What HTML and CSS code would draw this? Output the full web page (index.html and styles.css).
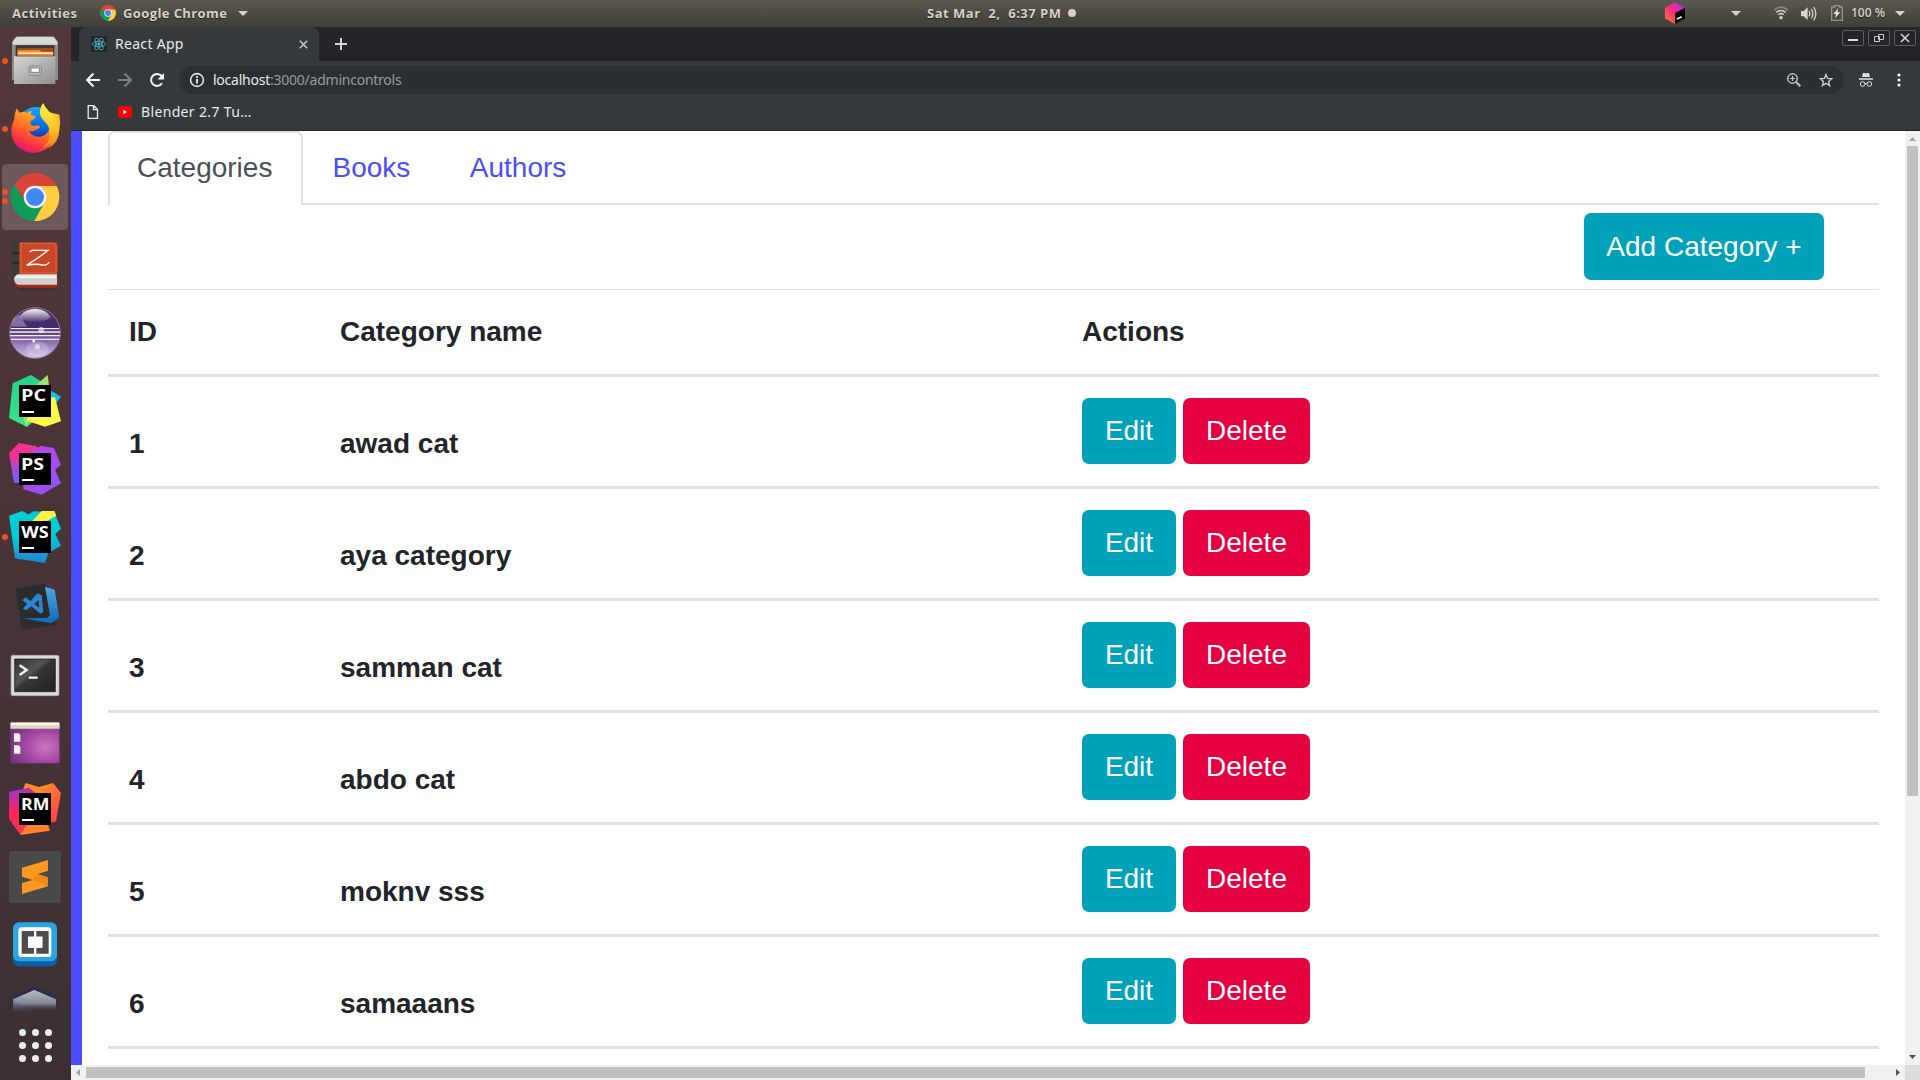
FILE: index.html
```html
<!DOCTYPE html>
<html lang="en">
<head>
<meta charset="utf-8">
<title>React App</title>
<link rel="stylesheet" href="styles.css">
</head>
<body>
<header class="topbar">
  <span class="tb activities">Activities</span>
  <svg class="tb-chrome" width="16" height="16" viewBox="32 68 146 146"><use href="#chrome"/></svg>
  <span class="tb appname">Google Chrome</span>
  <svg class="caret caret-app" width="10" height="5" viewBox="0 0 10 5"><path d="M0 0h10L5 5z"/></svg>
  <div class="clock"><span class="tb clock-text">Sat Mar&nbsp; 2,&nbsp; 6:37 PM</span><i class="clock-dot"></i></div>
  <div class="tray">
    <svg class="t-cube" width="20" height="22" viewBox="0 0 60 66">
      <defs><linearGradient id="tc" x1="0" y1="1" x2="1" y2="0"><stop offset="0" stop-color="#ff8a18"/><stop offset=".45" stop-color="#ff2d78"/><stop offset="1" stop-color="#9a2bff"/></linearGradient></defs>
      <path fill="url(#tc)" d="M30 0l30 17v33L30 66 0 49V17z"/><path d="M30 33l30-16v33L30 66z"/><path stroke="#fff" stroke-width="5" d="M36 51l14-7"/>
    </svg>
    <svg class="caret t-c1" width="10" height="5" viewBox="0 0 10 5"><path d="M0 0h10L5 5z"/></svg>
    <svg class="t-wifi" width="14" height="14" viewBox="0 0 42 42" fill="none" stroke="#d6d3cc" stroke-width="5"><path opacity=".45" d="M1 12Q21-5 41 12"/><path d="M7 19q14-11 28 0M13 26q8-6 16 0"/><circle cx="21" cy="35" r="5" fill="#d6d3cc" stroke="none"/></svg>
    <svg class="t-vol" width="16" height="15" viewBox="0 0 48 45" fill="none" stroke="#d6d3cc" stroke-width="4"><path fill="#d6d3cc" stroke="none" d="M0 15h8L20 4v38L8 31H0z"/><path d="M24 15q5 8 0 16M31 9q9 14 0 28M38 3q13 20 0 40"/></svg>
    <svg class="t-bat" width="12" height="16" viewBox="0 0 36 48"><path fill="none" stroke="#96938b" stroke-width="4" d="M2 6h8V2h16v4h8v40H2z"/><path fill="#e4e2dc" d="M22 10L7 27h8l-3 13 16-18h-9z"/></svg>
    <span class="tb pct">100 %</span>
    <svg class="caret t-c2" width="10" height="5" viewBox="0 0 10 5"><path d="M0 0h10L5 5z"/></svg>
  </div>
</header>
<div class="desktop">
  <nav class="dock">
    <div class="app dots-1"><svg viewBox="6 84 198 198">
      <defs><linearGradient id="fg" x1="0" y1="0" x2="1" y2="1"><stop offset="0" stop-color="#d6d6d6"/><stop offset="1" stop-color="#8f8f8f"/></linearGradient></defs>
      <path fill="#8d8d8d" d="M36 126l10-14q2-3 6-3h106q4 0 6 3l10 14v114H36z"/><path fill="#d9d9d9" d="M38 126l10-13q2-2 5-2h104q3 0 5 2l10 13v8H38z"/>
      <path fill="#333" d="M47 136h116v36H47z"/><path fill="#a24c16" d="M52 143h108v24H52z"/><path fill="#e58a36" d="M52 150h70v5h38v12H52z"/><path fill="#f9e0b0" d="M55 157h103v5H55z"/>
      <path fill="url(#fg)" d="M42 170h124v82H42z"/><path fill="#fff" opacity=".35" d="M42 168h124v4H42z"/><rect x="87" y="198" width="37" height="28" rx="4" fill="#bbb" stroke="#777" stroke-width="2"/><path fill="#fff" stroke="#555" stroke-width="2" d="M93 204h25v13H93z"/></svg></div>
    <div class="app dots-1"><svg viewBox="6 288 198 198">
      <defs><linearGradient id="ff1" x1=".7" y1="0" x2=".2" y2="1"><stop offset="0" stop-color="#ffd22e"/><stop offset=".45" stop-color="#ff7a20"/><stop offset=".75" stop-color="#ff3440"/><stop offset="1" stop-color="#d40c8c"/></linearGradient><linearGradient id="ff2" x1="0" y1="0" x2="0" y2="1"><stop offset="0" stop-color="#fff44f"/><stop offset=".6" stop-color="#ffc022"/><stop offset="1" stop-color="#ff7d22"/></linearGradient><linearGradient id="ff3" x1=".6" y1="0" x2=".5" y2="1"><stop offset="0" stop-color="#19a8ff"/><stop offset=".6" stop-color="#0560d8"/><stop offset="1" stop-color="#31107c"/></linearGradient></defs>
      <circle cx="108" cy="377" r="56" fill="url(#ff3)"/>
      <path fill="url(#ff1)" d="M50 325q4 8 10 13 14-6 20 1 5-6 16-7-4 8-3 13l14 4q-1 8-16 15l2 12q9 4 18 0 8 0 9 7-9 3-14 8-10 5-20 2 14 20 36 17 24-4 28-32 2-24-14-44l42 10q10 48-20 84-10 24-58 31-50-4-64-48-6-30 6-50 0-18 8-36z"/>
      <path fill="url(#ff2)" d="M130 309q6 16 24 31 20 18 24 48-1 40-32 56 7-8 8-16-12 14-28 15 26-18 22-48 0-16-12-28-20-18-16-36 2-14 10-22z"/></svg></div>
    <div class="app active dots-2"><svg viewBox="6 42 198 198"><g id="chrome">
      <path fill="#db4437" d="M43 105A72 72 0 0 1 170 108H105L74 150z"/><path fill="#0f9d58" d="M43 103A72 72 0 0 0 104 213L133 157 105 170 75 157z"/><path fill="#ffcd40" d="M170 108A72 72 0 0 1 103 213L134 157 132 118 105 108z"/>
      <circle cx="105" cy="141" r="34" fill="#f1f1f1"/><circle cx="105" cy="141" r="27" fill="#4285f4"/></g></svg></div>
    <div class="app"><svg viewBox="6 246 198 198">
      <path fill="#2a2a2a" opacity=".4" d="M48 412h118l8-6q-6 16-20 16H60z"/><path fill="#9e2c17" d="M44 380h129v28q0 5-8 5H56q-14-2-16-20z"/><path fill="#cfcfcf" d="M44 372h127v32H54q-12-6-12-18 0-8 2-14z"/><path fill="#f1f1f1" d="M50 376h118v9H46z"/>
      <path fill="#3d3935" d="M46 276h20v94q-20 2-24 14-2 12 8 26-12-4-14-22V286q0-8 10-10z"/><path fill="#c94726" d="M58 277h104q11 0 11 10v76q0 10-9 10H58z"/><path fill="none" stroke="#ef9b72" stroke-width="2" stroke-dasharray="5 4" d="M63 281h98q7 0 7 8v72q0 8-7 8H63z"/><path fill="none" stroke="#171513" stroke-width="3" d="M38 309h20M38 339h20"/>
      <path fill="none" stroke="#fff" stroke-width="4" d="M89 306q5-6 18-5h37q-22 18-64 45 30-6 48-1 14 2 20-9"/></svg></div>
    <div class="app"><svg viewBox="6 450 198 198">
      <defs><linearGradient id="ec" x1="0" y1="0" x2="0" y2="1"><stop offset="0" stop-color="#493567"/><stop offset=".4" stop-color="#45296d"/><stop offset=".62" stop-color="#8060aa"/><stop offset="1" stop-color="#d5c8ea"/></linearGradient><linearGradient id="ec2" x1="0" y1="0" x2="0" y2="1"><stop offset="0" stop-color="#fff" stop-opacity=".95"/><stop offset="1" stop-color="#fff" stop-opacity=".05"/></linearGradient></defs>
      <circle cx="105" cy="549" r="76" fill="url(#ec)" stroke="#8b7aa8" stroke-width="3"/><path fill="url(#ec2)" d="M58 500q14-23 47-24 33 1 47 24-12 16-47 16t-47-16z"/><path fill="#cbbde4" opacity=".45" d="M34 530q0-30 25-36 12 18 22 36z"/><path stroke="#f4f0fb" stroke-width="4" d="M33 536h144M30 546h150M30 557h150M33 568h144"/><g fill="#fff"><circle cx="124" cy="540" r="9" opacity=".6"/><circle cx="101" cy="573" r="4"/><ellipse cx="112" cy="597" rx="34" ry="22" opacity=".22"/><circle cx="112" cy="590" r="8" opacity=".5"/></g></svg></div>
    <div class="app"><svg viewBox="6 654 198 198">
      <defs><linearGradient id="pc" x1="0" y1="0" x2="0" y2="1"><stop offset="0" stop-color="#21d789"/><stop offset="1" stop-color="#3be28a"/></linearGradient></defs>
      <path fill="#07c3f2" d="M150 720l33 20-20 26h-30z"/><path fill="url(#pc)" d="M38 700l55-25 34 22 10 50-40 70-16 14-54-27z"/><path fill="#9be36b" d="M143 675l5 40-70 115-20-70 56-60z"/><path fill="#fcf84a" d="M152 742h13l18 72-48 16-55-18 10-30z"/>
      <path d="M57 705h96v96H57z"/><text class="jb" x="63" y="754" textLength="75" lengthAdjust="spacingAndGlyphs">PC</text><path fill="#fff" d="M66 783h36v6H66z"/></svg></div>
    <div class="app"><svg viewBox="6 18 198 198">
      <defs><linearGradient id="ps1" x1="0" y1="0" x2="0" y2="1"><stop offset="0" stop-color="#ff318c"/><stop offset=".35" stop-color="#f23199"/><stop offset=".8" stop-color="#7a5cff"/></linearGradient><linearGradient id="ps2" x1="0" y1="0" x2="1" y2="1"><stop offset="0" stop-color="#c740e0"/><stop offset="1" stop-color="#8a55fa"/></linearGradient></defs>
      <path fill="url(#ps1)" d="M27 70l30-31 52 10 20 20-60 90H42z"/><path fill="url(#ps2)" d="M89 65l34-17 39 6 21 50-18 15 18 41-58 34-55-16v-20z"/>
      <path d="M57 69h96v96H57z"/><text class="jb" x="63" y="119" textLength="69" lengthAdjust="spacingAndGlyphs">PS</text><path fill="#fff" d="M66 147h36v6H66z"/></svg></div>
    <div class="app dots-1"><svg viewBox="6 222 198 198">
      <defs><linearGradient id="ws1" x1="0" y1="0" x2="0" y2="1"><stop offset=".5" stop-color="#00cdd7"/><stop offset="1" stop-color="#2086d7"/></linearGradient></defs>
      <path fill="url(#ws1)" d="M27 257l40-14 22 12 60 100-14 44-90-14z"/><path fill="url(#ws1)" d="M75 260l25-16 63 2 20 50-17 16 17 35-68 40-30-22z"/><path fill="#fff045" d="M97 273l28-30h38l6 14-28 16z"/>
      <path d="M57 273h96v96H57z"/><text class="jb" x="64" y="323" textLength="82" lengthAdjust="spacingAndGlyphs">WS</text><path fill="#fff" d="M66 351h36v6H66z"/></svg></div>
    <div class="app"><svg viewBox="6 420 198 198">
      <defs><linearGradient id="vs" x1="0" y1="0" x2="0" y2="1"><stop offset="0" stop-color="#4fa6e4"/><stop offset="1" stop-color="#1268b8"/></linearGradient></defs>
      <path fill="#2b2b2b" stroke="#3a3636" stroke-width="2" d="M45 469l90-15 34 124-104 16z"/><path fill="url(#vs)" d="M135 464l29 9 14 84-25 17-86-15 73-1 10-8z"/><path fill="#2b86cf" fill-rule="evenodd" d="M112 484l13 6 5 50-9 5-27-22-15 12-10-5 12-15-14-10 9-9 16 11zM115 504l-12 12 15 11z"/></svg></div>
    <div class="app"><svg viewBox="6 630 198 198">
      <defs><linearGradient id="tm" x1="0" y1="0" x2="1" y2="1"><stop offset="0" stop-color="#333"/><stop offset=".4" stop-color="#555"/><stop offset=".5" stop-color="#333"/><stop offset="1" stop-color="#222"/></linearGradient></defs>
      <rect x="33" y="676" width="144" height="121" rx="5" fill="#d9d9d9" stroke="#aaa" stroke-width="2"/><path fill="url(#tm)" stroke="#111" stroke-width="2" d="M44 687h122v98H44z"/><path fill="none" stroke="#f2f2f2" stroke-width="7" d="M59 706l21 14-21 15M86 743h27"/></svg></div>
    <div class="app"><svg viewBox="6 -6 198 198">
      <defs><radialGradient id="sc" cx=".7" cy=".6" r=".7"><stop offset="0" stop-color="#cf79c0"/><stop offset=".5" stop-color="#a84aa6"/><stop offset="1" stop-color="#76377f"/></radialGradient></defs>
      <rect x="31" y="37" width="148" height="123" rx="5" fill="url(#sc)" stroke="#64306a" stroke-width="2"/><path fill="#dcd8c1" d="M31 41q0-4 4-4h141q3 0 3 4v15H31z"/><path fill="#f7f5e8" d="M33 39h144v6H33z"/><path fill="#f3eff3" d="M42 70h14l5 5v20H42zM42 106h14l5 5v20H42z"/></svg></div>
    <div class="app"><svg viewBox="6 198 198 198">
      <defs><linearGradient id="rm1" x1=".2" y1="0" x2=".4" y2="1"><stop offset="0" stop-color="#9039d0"/><stop offset=".5" stop-color="#ff2358"/><stop offset="1" stop-color="#ff3850"/></linearGradient><linearGradient id="rm2" x1="0" y1="0" x2="1" y2="1"><stop offset=".3" stop-color="#ff8b28"/><stop offset="1" stop-color="#ff305a"/></linearGradient></defs>
      <path fill="url(#rm2)" d="M77 219l40 12 42-12 24 30-15 86-30 5-68-105z"/><path fill="#ff812a" d="M61 375l20-50 60 10 9 27z"/><path fill="url(#rm1)" d="M27 245l60-12 50 40-60 77-16 24-34-48z"/>
      <path d="M57 249h96v96H57z"/><text class="jb" x="63" y="299" textLength="85" lengthAdjust="spacingAndGlyphs">RM</text><path fill="#fff" d="M66 327h36v6H66z"/></svg></div>
    <div class="app"><svg viewBox="6 402 198 198"><rect x="27" y="423" width="156" height="156" rx="7" fill="#494949"/><path fill="#ff9820" d="M144 450v32l-31 10 31 10v27l-78 23v-33l31-9-31-10v-27z"/><path fill="#d9770b" d="M97 510l16-18 31 10v26z" opacity=".45"/></svg></div>
    <div class="app"><svg viewBox="6 606 198 198"><rect x="39" y="644" width="132" height="125" rx="18" fill="#0a60a8"/><rect x="39" y="637" width="132" height="117" rx="18" fill="#28a5e2"/><rect x="55" y="652" width="99" height="89" rx="10" fill="#fff"/><path fill="#4d4d4d" d="M65 663h37v17H84v33h18v18H65zM109 663h37v68h-37v-18h18v-33h-18z"/><path fill="#fff" d="M84 680h43v33H84z"/></svg></div>
    <div class="app app-cut"><svg viewBox="6 810 198 198">
      <defs><linearGradient id="cb" x1="0" y1="0" x2="0" y2="1"><stop offset="0" stop-color="#b6c2c2"/><stop offset=".65" stop-color="#7f8493"/><stop offset="1" stop-color="#42353a" stop-opacity="0"/></linearGradient><linearGradient id="cb2" x1="0" y1="0" x2="0" y2="1"><stop offset=".4" stop-color="#292a54"/><stop offset="1" stop-color="#292a54" stop-opacity="0"/></linearGradient></defs>
      <path fill="url(#cb2)" opacity=".75" d="M30 862l65-29q8-4 16 0l65 29v38H30z"/><path fill="url(#cb)" d="M39 868l64-28 65 28v35H39z"/><path fill="#50578a" opacity=".3" d="M39 870l62 33H39z"/></svg></div>
    <div class="show-apps"><i></i><i></i><i></i><i></i><i></i><i></i><i></i><i></i><i></i></div>
  </nav>
  <main class="window">
    <div class="tabstrip">
      <div class="tab">
        <svg class="favicon" width="16" height="16" viewBox="0 0 48 48" fill="none" stroke="#4fb6d0" stroke-width="2.4"><rect width="48" height="48" rx="4" fill="#222428" stroke="none"/><ellipse cx="24" cy="24" rx="20" ry="8"/><ellipse cx="24" cy="24" rx="20" ry="8" transform="rotate(60 24 24)"/><ellipse cx="24" cy="24" rx="20" ry="8" transform="rotate(120 24 24)"/><circle cx="24" cy="24" r="3.5" fill="#61dafb"/></svg>
        <span class="ui tab-title">React App</span>
        <svg class="tab-close" width="9" height="9" viewBox="0 0 9 9" stroke="#c3c5c7" stroke-width="1.6"><path d="M.8.8l7.4 7.4M8.2.8L.8 8.2"/></svg>
      </div>
      <svg class="newtab" width="12" height="12" viewBox="0 0 12 12" stroke="#d0d2d4" stroke-width="2"><path d="M6 0v12M0 6h12"/></svg>
      <div class="winbtns">
        <span><svg width="20" height="14" viewBox="0 0 20 14"><path fill="#ddd" d="M5 8h10v2H5z"/></svg></span>
        <span><svg width="20" height="14" viewBox="0 0 20 14" fill="none" stroke="#ccc"><path d="M9.500 3.500h5v5h-5zM5.500 5.500h5v5h-5z"/></svg></span>
        <span><svg width="20" height="14" viewBox="0 0 20 14" stroke="#ddd" stroke-width="1.500"><path d="M6 3l8 8M14 3l-8 8"/></svg></span>
      </div>
    </div>
    <div class="toolbar">
      <svg class="nav-i" width="16" height="16" viewBox="0 0 16 16" fill="none" stroke="#f1f3f4" stroke-width="2"><path d="M15 8H2M8.500 1.500L2 8l6.500 6.500"/></svg>
      <svg class="nav-i" width="16" height="16" viewBox="0 0 16 16" fill="none" stroke="#7d8082" stroke-width="2"><path d="M1 8h13M7.500 1.500L14 8l-6.500 6.500"/></svg>
      <svg class="nav-i" width="16" height="16" viewBox="0 0 16 16" fill="none" stroke="#f1f3f4" stroke-width="2"><path d="M13 11.300A6 6 0 1 1 12.600 4"/><path fill="#f1f3f4" stroke="none" d="M15 1v6.500H8.500z"/></svg>
      <div class="omnibox">
        <svg width="16" height="16" viewBox="0 0 16 16" fill="none" stroke="#dfe1e3" stroke-width="1.600"><circle cx="8" cy="8" r="6.400"/><path stroke-width="2" d="M8 7v4.500M8 4v1.800"/></svg>
        <span class="ui url"><b>localhost</b>:3000/admincontrols</span>
        <svg class="zoom-i" width="14" height="14" viewBox="0 0 14 14" fill="none" stroke="#bfc3c6" stroke-width="1.500"><circle cx="5.500" cy="5.500" r="4.700"/><path stroke-width="2" d="M9 9l4.300 4.300"/><path stroke-width="1.200" d="M5.500 3v5M3 5.500h5"/></svg>
        <svg class="star-i" width="14" height="14" viewBox="0 0 14 14" fill="none" stroke="#c9ccce" stroke-width="1.400"><path d="M7 1.500l1.600 3.900 4.200.3-3.200 2.700 1 4.100L7 10.300l-3.600 2.200 1-4.100L1.200 5.700l4.200-.3z"/></svg>
      </div>
      <svg class="incog" width="14" height="14" viewBox="0 0 42 42"><path fill="#dfe1e3" d="M12 0h6l3 2 3-2h6l3 12H9zM0 16h42v4H0z"/><g fill="none" stroke="#dfe1e3" stroke-width="3"><circle cx="11" cy="33" r="7"/><circle cx="31" cy="33" r="7"/><path d="M18 32q3-2 6 0"/></g></svg>
      <svg class="kebab" width="4" height="14" viewBox="0 0 4 14" fill="#f1f3f4"><circle cx="2" cy="2" r="1.600"/><circle cx="2" cy="7" r="1.600"/><circle cx="2" cy="12" r="1.600"/></svg>
    </div>
    <div class="bookmarks">
      <svg width="12" height="14" viewBox="0 0 12 14" fill="none" stroke="#e8eaed" stroke-width="1.300"><path d="M1.200.7h5.600l3.700 3.800v8.800H1.200zM6.500.7v4h4"/></svg>
      <svg class="yt" width="14" height="12" viewBox="0 0 14 12"><rect width="14" height="12" rx="2.500" fill="#f00"/><path fill="#fff" d="M5.300 3.800v4.400L9 6z"/></svg>
      <span class="ui bm">Blender 2.7 Tu…</span>
    </div>
    <div class="viewport">
      <div class="page">
        <div class="nav-tabs"><a class="nav-link selected">Categories</a><a class="nav-link">Books</a><a class="nav-link">Authors</a></div>
        <div class="actions"><button class="btn info">Add Category +</button></div>
        <div class="table">
          <div class="row head"><span>ID</span><span>Category name</span><span>Actions</span></div>
          <div class="row"><span class="cell">1</span><span class="cell">awad cat</span><span class="btns"><button class="btn info">Edit</button><button class="btn danger">Delete</button></span></div>
          <div class="row"><span class="cell">2</span><span class="cell">aya category</span><span class="btns"><button class="btn info">Edit</button><button class="btn danger">Delete</button></span></div>
          <div class="row"><span class="cell">3</span><span class="cell">samman cat</span><span class="btns"><button class="btn info">Edit</button><button class="btn danger">Delete</button></span></div>
          <div class="row"><span class="cell">4</span><span class="cell">abdo cat</span><span class="btns"><button class="btn info">Edit</button><button class="btn danger">Delete</button></span></div>
          <div class="row"><span class="cell">5</span><span class="cell">moknv sss</span><span class="btns"><button class="btn info">Edit</button><button class="btn danger">Delete</button></span></div>
          <div class="row"><span class="cell">6</span><span class="cell">samaaans</span><span class="btns"><button class="btn info">Edit</button><button class="btn danger">Delete</button></span></div>
        </div>
      </div>
      <div class="vscroll"><svg width="15" height="15" viewBox="0 0 15 15" fill="#a3a3a3"><path d="M4 10h7L7.500 6z"/></svg><i></i><svg width="15" height="15" viewBox="0 0 15 15" fill="#505050"><path d="M4 5h7L7.500 9z"/></svg></div>
      <div class="hscroll"><svg width="15" height="15" viewBox="0 0 15 15" fill="#a3a3a3"><path d="M9 4v7L5 7.500z"/></svg><i></i><svg width="15" height="15" viewBox="0 0 15 15" fill="#505050"><path d="M6 4v7l4-3.500z"/></svg></div>
      <div class="corner"></div>
    </div>
  </main>
</div>
</body>
</html>
```
FILE: styles.css
```css
* { box-sizing: border-box; }
body { margin: 0; width: 1920px; height: 1080px; overflow: hidden; display: flex; flex-direction: column; font-family: "Liberation Sans", Arial, sans-serif; }
svg { display: block; flex: none; }
span { white-space: nowrap; }

.topbar { height: 27px; flex: none; display: flex; align-items: center; padding: 0 0 1px 12px; background: linear-gradient(#5a574e, #403e38); }
.tb { font: 700 13px/26px "Open Sans", "Noto Sans", sans-serif; color: #d6d2c9; text-shadow: 0 1px 1px #222; }
.activities { width: 88px; letter-spacing: .5px; }
.appname { width: 110px; margin-left: 7px; letter-spacing: .4px; }
.caret { fill: #d6d3cc; }
.caret-app { margin-left: 5px; }
.clock { margin-left: 679px; display: flex; align-items: center; width: 150px; }
.clock-text { width: 137px; letter-spacing: .5px; }
.clock-dot { width: 8px; height: 8px; border-radius: 50%; background: #d6d3cc; margin-left: 4px; }
.tray { margin-left: auto; display: flex; align-items: center; width: 255px; }
.t-c1 { margin-left: 46px; }
.t-wifi { margin-left: 33px; }
.t-vol { margin-left: 13px; }
.t-bat { margin-left: 14px; }
.pct { margin-left: 8px; width: 34px; font-size: 12px; font-weight: 600; }
.t-c2 { margin-left: 10px; }

.desktop { flex: 1; display: flex; min-height: 0; }
.dock { width: 71px; flex: none; padding: 1px 2px 0; display: flex; flex-direction: column; gap: 2px; background: linear-gradient(#52383b, #4b3438 40%, #3c3033); }
.app { width: 66px; height: 66px; flex: none; position: relative; border-radius: 4px; }
.app svg { width: 66px; height: 66px; }
.app.active { background: #6d585c; }
.app-cut { height: 32px; overflow: hidden; }
.dots-1::before, .dots-2::before, .dots-2::after { content: ""; position: absolute; left: 0; top: 30px; width: 6px; height: 6px; border-radius: 50%; background: #e95420; }
.dots-2::before { top: 25px; }
.dots-2::after { top: 34px; }
.show-apps { display: grid; grid-template-columns: repeat(3, 7px); gap: 6px; padding: 15px 0 0 17px; }
.show-apps i { width: 7px; height: 7px; border-radius: 50%; background: #f0eeec; }
.jb { font: 700 50px "Open Sans", sans-serif; fill: #fff; }

.window { flex: 1; display: flex; flex-direction: column; background: #35393c; min-width: 0; }
.ui { font: 14px/20px "Noto Sans", sans-serif; color: #e8eaed; }
.tabstrip { height: 34px; flex: none; display: flex; align-items: center; background: #242529; padding-left: 8px; }
.tab { width: 240px; height: 34px; border-radius: 8px 8px 0 0; background: #35393c; display: flex; align-items: center; padding-left: 12px; }
.tab-title { margin-left: 8px; width: 184px; letter-spacing: .3px; }
.newtab { margin-left: 16px; }
.winbtns { margin-left: auto; display: flex; gap: 4px; padding: 0 4px 12px 0; }
.winbtns span { width: 22px; height: 16px; border: 1px solid #5c5d60; border-radius: 2px; }
.toolbar { height: 38px; flex: none; display: flex; align-items: center; padding-left: 14px; }
.nav-i { margin-right: 16px; }
.omnibox { width: 1665px; height: 28px; border-radius: 14px; background: #2b2f31; margin-left: -2px; display: flex; align-items: center; padding-left: 10px; }
.url { margin-left: 8px; width: 1014px; color: #989c9f; letter-spacing: -.24px; }
.url b { font-weight: 400; color: #e8eaed; }
.zoom-i { margin-left: auto; }
.star-i { margin: 0 11px 0 18px; }
.incog { margin-left: 15px; }
.kebab { margin-left: 24px; }
.bookmarks { height: 32px; flex: none; display: flex; align-items: center; padding: 0 0 6px 16px; border-bottom: 1px solid #242729; }
.yt { margin-left: 19px; }
.bm { margin-left: 9px; letter-spacing: .35px; }

.viewport { flex: 1; display: grid; grid-template: 1fr 15px / 1fr 15px; min-height: 0; }
.page { background: #fff; border-left: 11px solid #4c4cff; padding: 0 26px; overflow: hidden; font-size: 28px; line-height: 42px; color: #212529; }
.nav-tabs { height: 74px; display: flex; border-bottom: 2px solid #dee2e6; }
.nav-link { height: 74px; padding: 16px 30px 0 29.500px; color: #4c4cff; }
.nav-link.selected { width: 195px; padding: 14px 27px 0; color: #495057; background: #fff; border: 2px solid #dee2e6; border-bottom: 0; border-radius: 7px 7px 0 0; }
.actions { height: 84px; display: flex; justify-content: flex-end; padding: 8px 55px 0 0; }
.btn { height: 66px; border: 0; border-radius: 7px; color: #fff; font: 28px/42px "Liberation Sans", Arial, sans-serif; padding: 0; flex: none; }
.info { background: #00a2ba; width: 94px; }
.danger { background: #e60042; width: 127px; }
.actions .btn { width: 240px; height: 67px; }
.table { border-top: 1px solid #dee2e6; }
.row { height: 112px; border-bottom: 3px solid #dee2e6; display: grid; grid-template-columns: 211px 742px 1fr; padding: 21px 0 0 21px; font-weight: 700; }
.head { height: 87px; }
.cell { padding-top: 25px; }
.btns { display: flex; gap: 7px; }
.vscroll { background: #f1f1f1; display: flex; flex-direction: column; align-items: center; }
.vscroll i { width: 11px; height: 650px; background: #c1c1c1; margin-bottom: auto; }
.hscroll { background: #f1f1f1; display: flex; align-items: center; }
.hscroll i { width: 1779px; height: 11px; background: #c1c1c1; margin-right: auto; }
.corner { background: #dcdcdc; }
```
